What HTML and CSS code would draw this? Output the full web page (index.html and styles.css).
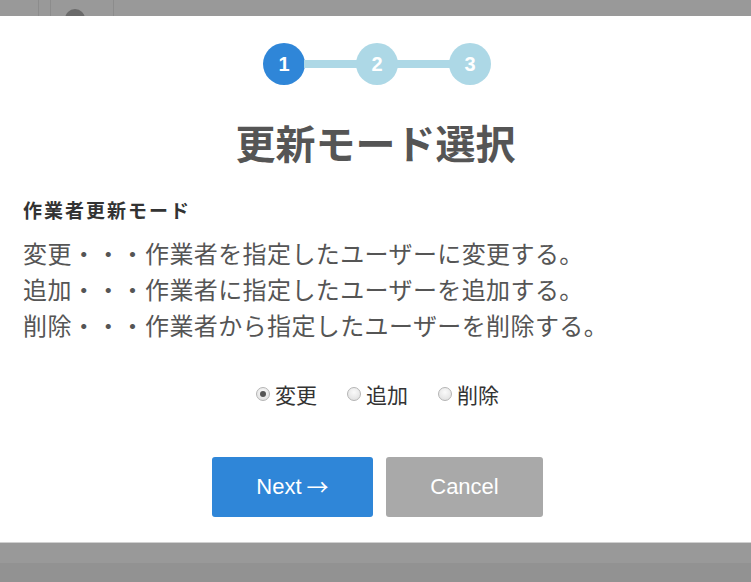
FILE: index.html
```html
<!DOCTYPE html>
<html lang="ja">
<head>
<meta charset="utf-8">
<link rel="stylesheet" href="styles.css">
</head>
<body>
<div class="topstrip">
  <div class="cell c1"></div>
  <div class="cell c2"></div>
  <div class="cell c3"><span class="avatar"></span></div>
  <div class="cell c4"></div>
</div>
<div class="modal">
  <div class="stepper">
    <span class="step active">1</span>
    <span class="bar"></span>
    <span class="step">2</span>
    <span class="bar"></span>
    <span class="step">3</span>
  </div>
  <h1 class="title">更新モード選択</h1>
  <h2 class="subtitle">作業者更新モード</h2>
  <div class="desc">
    <p>変更・・・作業者を指定したユーザーに変更する。</p>
    <p>追加・・・作業者に指定したユーザーを追加する。</p>
    <p>削除・・・作業者から指定したユーザーを削除する。</p>
  </div>
  <div class="radios">
    <label class="opt"><input type="radio" name="mode" checked><span>変更</span></label>
    <label class="opt"><input type="radio" name="mode"><span>追加</span></label>
    <label class="opt"><input type="radio" name="mode"><span>削除</span></label>
  </div>
  <div class="buttons">
    <button class="btn next"><span>Next</span><span class="arrow">→</span></button>
    <button class="btn cancel"><span>Cancel</span></button>
  </div>
</div>
<div class="bottom">
  <div class="band"></div>
</div>
</body>
</html>
```
FILE: styles.css
```css
html, body {
  margin: 0;
  padding: 0;
}
body {
  width: 751px;
  height: 582px;
  overflow: hidden;
  background: #999999;
  font-family: "Noto Sans CJK JP", "Noto Sans", sans-serif;
}
.topstrip {
  height: 16px;
  display: flex;
  background: #999999;
  overflow: hidden;
}
.cell {
  height: 16px;
  border-right: 1px solid #8c8c8c;
  box-sizing: border-box;
}
.c1 { width: 39px; }
.c2 { width: 12px; }
.c3 {
  width: 63px;
  display: flex;
  padding-left: 14px;
  box-sizing: border-box;
}
.avatar {
  width: 20px;
  height: 20px;
  border-radius: 50%;
  background: #6a6a6a;
  margin-top: 9px;
  flex: none;
}
.c4 { flex: 1; border-right: none; }

.modal {
  height: 527px;
  background: #ffffff;
  box-sizing: border-box;
  border-bottom: 1px solid #d0d0d0;
  padding-top: 27px;
}
.stepper {
  display: flex;
  justify-content: center;
  align-items: center;
  height: 42px;
  padding-left: 3px;
}
.step {
  width: 42px;
  height: 42px;
  border-radius: 50%;
  background: #add8e6;
  color: #ffffff;
  font-family: "Liberation Sans", Arial, sans-serif;
  font-weight: bold;
  font-size: 20px;
  display: flex;
  align-items: center;
  justify-content: center;
  flex: none;
}
.step.active { background: #2f86d8; }
.bar {
  width: 53px;
  height: 8px;
  background: #add8e6;
  margin: 0 -1px;
}
.title {
  margin: 33px 0 0;
  height: 48px;
  line-height: 48px;
  text-align: center;
  font-size: 40px;
  font-weight: bold;
  color: #555555;
}
.subtitle {
  margin: 32px 0 0 23px;
  height: 24px;
  line-height: 24px;
  font-size: 19px;
  font-weight: bold;
  color: #333333;
  letter-spacing: 2px;
}
.desc {
  margin: 13px 0 0 23px;
  color: #555555;
  font-size: 24px;
  letter-spacing: 0.4px;
}
.desc p {
  margin: 0;
  height: 36px;
  line-height: 36px;
}
.radios {
  margin-top: 36px;
  height: 30px;
  display: flex;
  justify-content: center;
  gap: 30px;
  padding-left: 4px;
}
.opt {
  display: flex;
  align-items: center;
  font-size: 21px;
  color: #333333;
  gap: 5px;
}
.opt input {
  appearance: none;
  -webkit-appearance: none;
  margin: 0;
  width: 14px;
  height: 14px;
  border-radius: 50%;
  border: 1px solid #b5b5b5;
  background: radial-gradient(circle at 50% 35%, #fafafa, #dcdcdc);
  box-sizing: border-box;
  position: relative;
}
.opt input:checked::after {
  content: "";
  position: absolute;
  left: 3px;
  top: 3px;
  width: 6px;
  height: 6px;
  border-radius: 50%;
  background: #555555;
}
.buttons {
  margin-top: 48px;
  display: flex;
  justify-content: center;
  gap: 13px;
  padding-left: 4px;
}
.btn {
  height: 60px;
  border: none;
  border-radius: 3px;
  color: #ffffff;
  font-family: "Liberation Sans", Arial, sans-serif;
  font-size: 22px;
  padding: 0;
  display: flex;
  align-items: center;
  justify-content: center;
  gap: 5px;
  line-height: 1;
}
.arrow {
  font-family: "Noto Sans CJK JP", sans-serif;
  font-size: 22px;
  line-height: 1;
  margin-top: -5px;
}
.next { width: 161px; background: #2f86d8; }
.cancel { width: 157px; background: #a9a9a9; }
.bottom {
  height: 39px;
  background: #999999;
  padding-top: 20px;
  box-sizing: border-box;
}
.band {
  height: 19px;
  background: #929292;
}
```
